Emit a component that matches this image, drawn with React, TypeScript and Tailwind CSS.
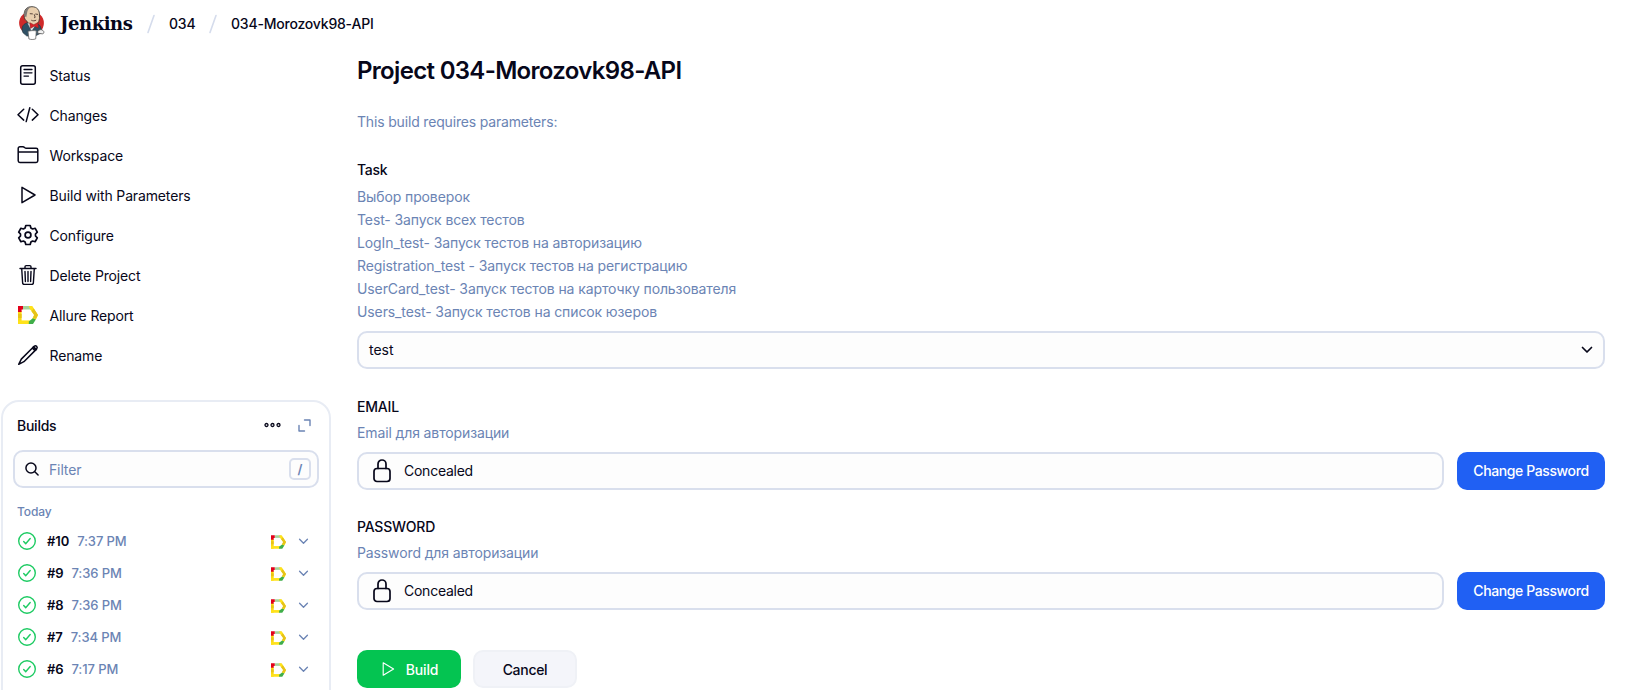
import type { ReactNode } from "react";

const stroke = {
  fill: "none",
  stroke: "currentColor",
  strokeLinecap: "round" as const,
  strokeLinejoin: "round" as const,
};

function JenkinsLogo() {
  return (
    <svg className="h-[34px] w-[26px]" viewBox="0 0 26 34">
      <ellipse cx="12.5" cy="17" rx="12.4" ry="11.8" fill="#cf2a2a" />
      <path d="M4.200 27C1.800 23 3 18.400 8 16.800l8.500.2c5 1.200 6.300 5 5.600 10l-4.900 2.500-9.300.6z" fill="#2f5064" stroke="#23323d" strokeWidth=".6" />
      <path d="M5.200 9.300C4.900 3.500 8 .6 13 .7c5.100.1 8 3.400 7.400 9.300.5 3.200-.6 8.300-5.200 9.600-3 .3-5.700-1.400-7-4.100C6.300 14.500 5 12.300 5.200 9.300z" fill="#e9cfae" stroke="#3d3a36" strokeWidth=".9" />
      <path d="M5.300 8.200C5.500 3.800 8.500.7 12.600.8 9.500 2 8.500 4.200 8.200 6.300L7.300 11.300l-1.500-1z" fill="#7d7a76" />
      <path d="M10.800 7.700l3 .2M16.300 8l2.700.4M15.200 8.300l1 3-1.100.5M12.300 14.200c1.500.9 3.500.8 4.900-.1" fill="none" stroke="#49372f" strokeWidth=".9" />
      <path d="M8.500 17l4 8 4.500-6.500-2.500.8z" fill="#e4e4e4" />
      <path d="M10.800 16.700l4 2 4-2.100.5 5.300-4.100-1.700-3.800 2.200z" fill="#d8232a" stroke="#81201d" strokeWidth=".5" />
      <path d="M9 25.300c2.500-.8 6-.9 8.300-.4l-.6 8c-2.200.8-5 .8-6.800 0z" fill="#fff" stroke="#666" strokeWidth=".8" />
      <path d="M18.800 25.200c1.500-1.800 4-2 5.200-.7 1.500 1.200.9 3.300-.5 3.300l-4.700-.4z" fill="#f1f1f1" stroke="#555" strokeWidth=".8" />
    </svg>
  );
}

function Allure({ className }: { className: string }) {
  return (
    <svg className={className} viewBox="0 0 20 18">
      <path d="M5 0h8v3.500H5z" fill="#a5d39b" />
      <path d="M0 5h3.600v13H0z" fill="#fbd915" />
      <path d="M0 8h3.600v4H0z" fill="#e9c315" />
      <path d="M0 14.400h12V18H0z" fill="#ffe21a" />
      <path d="M10.800 0h3.500L20 9l-2.500 5-3.200-1.500L16.200 9l-4-5.500z" fill="#ffe21a" />
      <path d="M15.800 2.600L20 9l-2 4-3-1.600L16.200 9l-2.700-3.800z" fill="#e6c319" />
      <path d="M14.800 12.300l3 1.200L15 18h-4.200v-2.600z" fill="#3fae49" />
      <path d="M0 0h5v3.500H3.600V6H0z" fill="#e2001a" />
    </svg>
  );
}

function Play({ className, width }: { className: string; width: number }) {
  return (
    <svg className={className} viewBox="0 0 20 20" {...stroke} strokeWidth={width}>
      <path d="M4 2.300v15.400L17 10z" />
    </svg>
  );
}

function Lock() {
  return (
    <svg className="h-6 w-5 shrink-0" viewBox="0 0 20 24" {...stroke} strokeWidth={1.700}>
      <path d="M6 9.500V5a4 4 0 0 1 8 0v4.500" />
      <rect x="2" y="9.500" width="16" height="13" rx="3" />
    </svg>
  );
}

function Chevron({ className, width }: { className: string; width: number }) {
  return (
    <svg className={className} viewBox="0 0 12 8" {...stroke} strokeWidth={width}>
      <path d="M1.500 1.500L6 6l4.500-4.500" />
    </svg>
  );
}

const menu: { label: string; icon: ReactNode }[] = [
  {
    label: "Status",
    icon: (
      <svg className="size-[22px]" viewBox="0 0 22 22" {...stroke} strokeWidth={1.500}>
        <rect x="3.700" y="1.700" width="14.600" height="18.600" rx="2" />
        <path d="M7 5.500h8M7 8.800h8M7 12.100h4.500" strokeWidth={1.300} />
      </svg>
    ),
  },
  {
    label: "Changes",
    icon: (
      <svg className="size-[22px]" viewBox="0 0 22 22" {...stroke} strokeWidth={1.500}>
        <path d="M6.700 5.300L1 10.700l5.700 5.400M15.300 5.300l5.700 5.400-5.700 5.400M12.800 3.800L9.200 17.600" />
      </svg>
    ),
  },
  {
    label: "Workspace",
    icon: (
      <svg className="size-[22px]" viewBox="0 0 22 22" {...stroke} strokeWidth={1.500}>
        <path d="M1.200 16.800V4.500a1.700 1.700 0 0 1 1.700-1.700h3c1.700 0 1.600 1.500 3.300 1.500h9.900a1.700 1.700 0 0 1 1.700 1.700v10.800a1.700 1.700 0 0 1-1.700 1.700H2.900a1.700 1.700 0 0 1-1.700-1.700zM1.200 8h19.600" />
      </svg>
    ),
  },
  { label: "Build with Parameters", icon: <Play className="size-5" width={1.500} /> },
  {
    label: "Configure",
    icon: (
      <svg className="size-[22px]" viewBox="0 0 22 22" {...stroke} strokeWidth={1.700}>
        <path d="M8.800 1.500h4.400l.7 2.500 1.700 1 2.500-.7 2.200 3.800-1.800 1.900v2l1.800 1.900-2.200 3.800-2.500-.7-1.700 1-.7 2.500H8.800L8.100 18l-1.700-1-2.500.7-2.200-3.800L3.500 12v-2L1.700 8.100l2.200-3.800 2.500.7 1.700-1z" />
        <circle cx="11" cy="11" r="2.900" />
      </svg>
    ),
  },
  {
    label: "Delete Project",
    icon: (
      <svg className="size-[22px]" viewBox="0 0 22 22" {...stroke} strokeWidth={1.400}>
        <path d="M3 4.500h16M4.700 4.500l.9 14a1.900 1.900 0 0 0 1.900 1.900h7a1.900 1.900 0 0 0 1.900-1.900l.9-14M8 4.300V2.800a1.200 1.200 0 0 1 1.200-1.200h3.600A1.200 1.200 0 0 1 14 2.800v1.500M8 7.500l.4 10M11 7.500v10M14 7.500l-.4 10" />
      </svg>
    ),
  },
  { label: "Allure Report", icon: <Allure className="h-[18px] w-5" /> },
  {
    label: "Rename",
    icon: (
      <svg className="size-[22px]" viewBox="0 0 22 22" {...stroke} strokeWidth={1.500}>
        <path d="M15.400 4L4.300 15.100 1.700 20.300l5.200-2.600L18 6.600zM15.400 4l1.700-1.700c1.900-1.400 4 .7 2.600 2.600L18 6.600" />
        <path d="M16.600 3.200l2.200 2.200" strokeWidth={2.200} />
      </svg>
    ),
  },
];

const builds = [
  ["#10", "7:37 PM"],
  ["#9", "7:36 PM"],
  ["#8", "7:36 PM"],
  ["#7", "7:34 PM"],
  ["#6", "7:17 PM"],
];

const description = [
  "Выбор проверок",
  "Test- Запуск всех тестов",
  "LogIn_test- Запуск тестов на авторизацию",
  "Registration_test - Запуск тестов на регистрацию",
  "UserCard_test- Запуск тестов на карточку пользователя",
  "Users_test- Запуск тестов на список юзеров",
];

function Slash() {
  return (
    <svg className="h-5 w-2" viewBox="0 0 8 20" {...stroke} strokeWidth={1.600}>
      <path d="M7 1.500L1 18.500" />
    </svg>
  );
}

function Secret({ name, hint }: { name: string; hint: string }) {
  return (
    <section>
      <div className="h-[27px] leading-[27px] font-medium tracking-[-0.2px]">{name}</div>
      <div className="h-[26px] leading-[26px] tracking-[-0.12px] text-[#6b84b4]">{hint}</div>
      <div className="mt-[6px] flex gap-[13px]">
        <div className="flex h-[38px] flex-1 items-center gap-3 rounded-[10px] border-2 border-[#d9dfed] bg-[#fdfdfd] pl-[13px]">
          <Lock />
          <span className="tracking-[-0.25px]">Concealed</span>
        </div>
        <button className="h-[38px] w-[148px] rounded-[10px] bg-[#2060f3] font-medium tracking-[-0.4px] text-white">Change Password</button>
      </div>
    </section>
  );
}

export default function App() {
  return (
    <div className="h-[690px] w-[1631px] overflow-hidden bg-white font-['Inter',sans-serif] text-[14px] leading-5 tracking-[-0.14px] text-[#07071a]">
      <header className="flex h-12 items-center pl-[19px]">
        <div className="-mt-[2px]"><JenkinsLogo /></div>
        <span className="ml-[15px] w-[73px] font-['DejaVu_Serif',serif] text-[18px] font-bold tracking-[-0.45px]">Jenkins</span>
        <div className="ml-[14px] text-[#d5dcec]"><Slash /></div>
        <span className="ml-[14px] w-[27px] font-medium tracking-[-0.2px]">034</span>
        <div className="ml-[13px] text-[#d5dcec]"><Slash /></div>
        <span className="ml-[14px] font-medium tracking-[-0.2px]">034-Morozovk98-API</span>
      </header>
      <div className="flex h-[642px]">
        <aside className="flex w-[333px] shrink-0 flex-col">
          <nav className="mt-[7px] pl-[17px]">
            {menu.map((item) => (
              <div key={item.label} className="flex h-10 items-center">
                <span className="flex w-[22px] justify-center">{item.icon}</span>
                <span className="ml-[10.5px] pt-[2px]">{item.label}</span>
              </div>
            ))}
          </nav>
          <section className="mt-[25px] ml-px h-[320px] w-[330px] shrink-0 rounded-[18px] border-2 border-[#e8ecf4] px-[10px]">
            <div className="flex h-12 items-center px-1">
              <span className="flex-1 font-medium tracking-[-0.25px]">Builds</span>
              <svg className="-mt-[2px] h-[6px] w-[17px]" viewBox="0 0 17 6" {...stroke} strokeWidth={1.300}>
                <circle cx="2.500" cy="3" r="1.500" /><circle cx="8.500" cy="3" r="1.500" /><circle cx="14.500" cy="3" r="1.500" />
              </svg>
              <svg className="-mt-px mr-1 ml-[17px] size-[13px] text-[#6b84b4]" viewBox="0 0 13 13" {...stroke} strokeWidth={1.400}>
                <path d="M6.500 1h5.500v5.500M1 6.500V12h5.500" />
              </svg>
            </div>
            <div className="flex h-[38px] items-center rounded-[10px] border-2 border-[#d9dfed] bg-[#fdfdfd] pr-[6px] pl-[10px]">
              <svg className="-mt-px size-[14px]" viewBox="0 0 15 15" {...stroke} strokeWidth={1.600}>
                <circle cx="6.400" cy="6.400" r="5.400" /><path d="M10.500 10.500l3.500 3.500" />
              </svg>
              <span className="ml-[10px] flex-1 pt-[2px] text-[#6b84b4]">Filter</span>
              <kbd className="flex size-[22px] items-center justify-center rounded-[5px] border-2 border-[#d9dfed] font-['Inter',sans-serif] text-[13px] font-semibold text-[#6b84b4]">/</kbd>
            </div>
            <div className="mt-[13px] h-[24px] pl-1 text-[12px] leading-[22px] font-medium tracking-[-0.1px] text-[#6b84b4]">Today</div>
            {builds.map(([id, time]) => (
              <div key={id} className="flex h-8 items-center pl-[5px] text-[13px] tracking-[-0.1px]">
                <svg className="mr-[11px] size-[18px] text-[#1ecb63]" viewBox="0 0 18 18" {...stroke} strokeWidth={1.400}>
                  <circle cx="9" cy="9" r="8.300" /><path d="M5.700 9.500l2 2.200 4.500-5.200" />
                </svg>
                <span className="font-semibold">{id}</span>
                <span className="ml-2 flex-1 font-medium text-[#6b84b4]">{time}</span>
                <Allure className="mt-[2px] h-[14px] w-[15px]" />
                <Chevron className="mr-[10px] ml-[12px] h-[7px] w-[11px] text-[#6b84b4]" width={1.500} />
              </div>
            ))}
          </section>
        </aside>
        <main className="ml-[24px] w-[1248px]">
          <h1 className="pt-[7px] text-[24px] leading-8 font-semibold tracking-[-0.68px]">Project 034-Morozovk98-API</h1>
          <p className="mt-[25px] tracking-[-0.17px] text-[#6b84b4]">This build requires parameters:</p>
          <div className="mt-[28px] font-medium tracking-[-0.3px]">Task</div>
          <div className="mt-[5px] tracking-[-0.11px] text-[#6b84b4]">
            {description.map((line) => (
              <div key={line} className="h-[23px] leading-[23px]">{line}</div>
            ))}
          </div>
          <div className="mt-[8px] flex h-[38px] items-center justify-between rounded-[10px] border-2 border-[#d9dfed] bg-[#fdfdfd] pr-[10px] pl-[10px]">
            <span className="tracking-normal">test</span>
            <Chevron className="h-[8px] w-[12px]" width={1.700} />
          </div>
          <div className="mt-[24px]"><Secret name="EMAIL" hint="Email для авторизации" /></div>
          <div className="mt-[23px]"><Secret name="PASSWORD" hint="Password для авторизации" /></div>
          <div className="mt-[40px] flex gap-3">
            <button className="flex h-[38px] w-[104px] items-center justify-center gap-[10px] rounded-[10px] bg-[#04c451] font-medium text-white">
              <Play className="size-4" width={1.400} />
              <span className="pt-[2px]">Build</span>
            </button>
            <button className="h-[38px] w-[104px] rounded-[10px] border-2 border-[#eff1f6] bg-[#f4f5fa] pt-[2px] font-medium tracking-[-0.3px]">Cancel</button>
          </div>
        </main>
      </div>
    </div>
  );
}
